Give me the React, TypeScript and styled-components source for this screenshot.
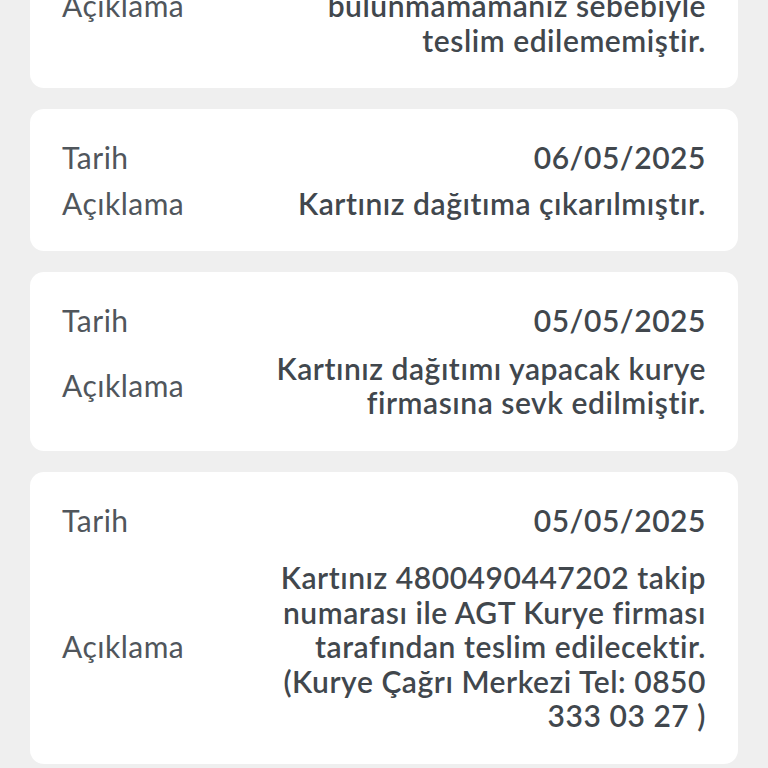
import { useLayoutEffect, useRef } from "react";
import styled, { createGlobalStyle } from "styled-components";

const GlobalStyle = createGlobalStyle`
  html, body {
    margin: 0;
    padding: 0;
    background: #efefef;
    font-family: Lato, "Open Sans", sans-serif;
  }
`;

// Pencere: sayfa aşağı kaydırılmış halde görünüyor
const Viewport = styled.div`
  height: 768px;
  overflow: hidden;
  background: #efefef;
`;

const List = styled.div`
  display: flex;
  flex-direction: column;
  gap: 21px;
  padding: 20px 30px 40px;
`;

const Card = styled.div<{ $rowGap: number }>`
  background: #ffffff;
  border-radius: 14px;
  padding: 31px 32px 31px;
  display: flex;
  flex-direction: column;
  gap: ${(p) => p.$rowGap}px;
`;

const Row = styled.div`
  display: flex;
  align-items: center;
  justify-content: space-between;
`;

const Label = styled.div`
  flex: 0 0 200px;
  font-size: 30px;
  line-height: 34.5px;
  letter-spacing: 0.5px;
  color: #50565c;
`;

const Value = styled.div`
  flex: 1;
  text-align: right;
  font-size: 30px;
  line-height: 34.5px;
  letter-spacing: 0.55px;
  font-weight: 600;
  color: #41474d;
`;

type Movement = { date: string; text: string; gap: number };

const movements: Movement[] = [
  {
    date: "07/05/2025",
    text: "Kartınız adresinizde bulunmamamanız sebebiyle teslim edilememiştir.",
    gap: 22,
  },
  { date: "06/05/2025", text: "Kartınız dağıtıma çıkarılmıştır.", gap: 11 },
  {
    date: "05/05/2025",
    text: "Kartınız dağıtımı yapacak kurye firmasına sevk edilmiştir.",
    gap: 13,
  },
  {
    date: "05/05/2025",
    text: "Kartınız 4800490447202 takip numarası ile AGT Kurye firması tarafından teslim edilecektir. (Kurye Çağrı Merkezi Tel: 0850 333 03 27 )",
    gap: 23,
  },
];

const App = () => {
  const viewRef = useRef<HTMLDivElement>(null);
  const secondRef = useRef<HTMLDivElement>(null);

  useLayoutEffect(() => {
    if (viewRef.current && secondRef.current) {
      viewRef.current.scrollTop = secondRef.current.offsetTop - 109;
    }
  }, []);

  return (
    <>
      <GlobalStyle />
      <Viewport ref={viewRef}>
        <List>
          {movements.map((m, i) => (
            <Card key={i} $rowGap={m.gap} ref={i === 1 ? secondRef : undefined}>
              <Row>
                <Label>Tarih</Label>
                <Value>{m.date}</Value>
              </Row>
              <Row>
                <Label>Açıklama</Label>
                <Value>{m.text}</Value>
              </Row>
            </Card>
          ))}
        </List>
      </Viewport>
    </>
  );
};

export default App;
